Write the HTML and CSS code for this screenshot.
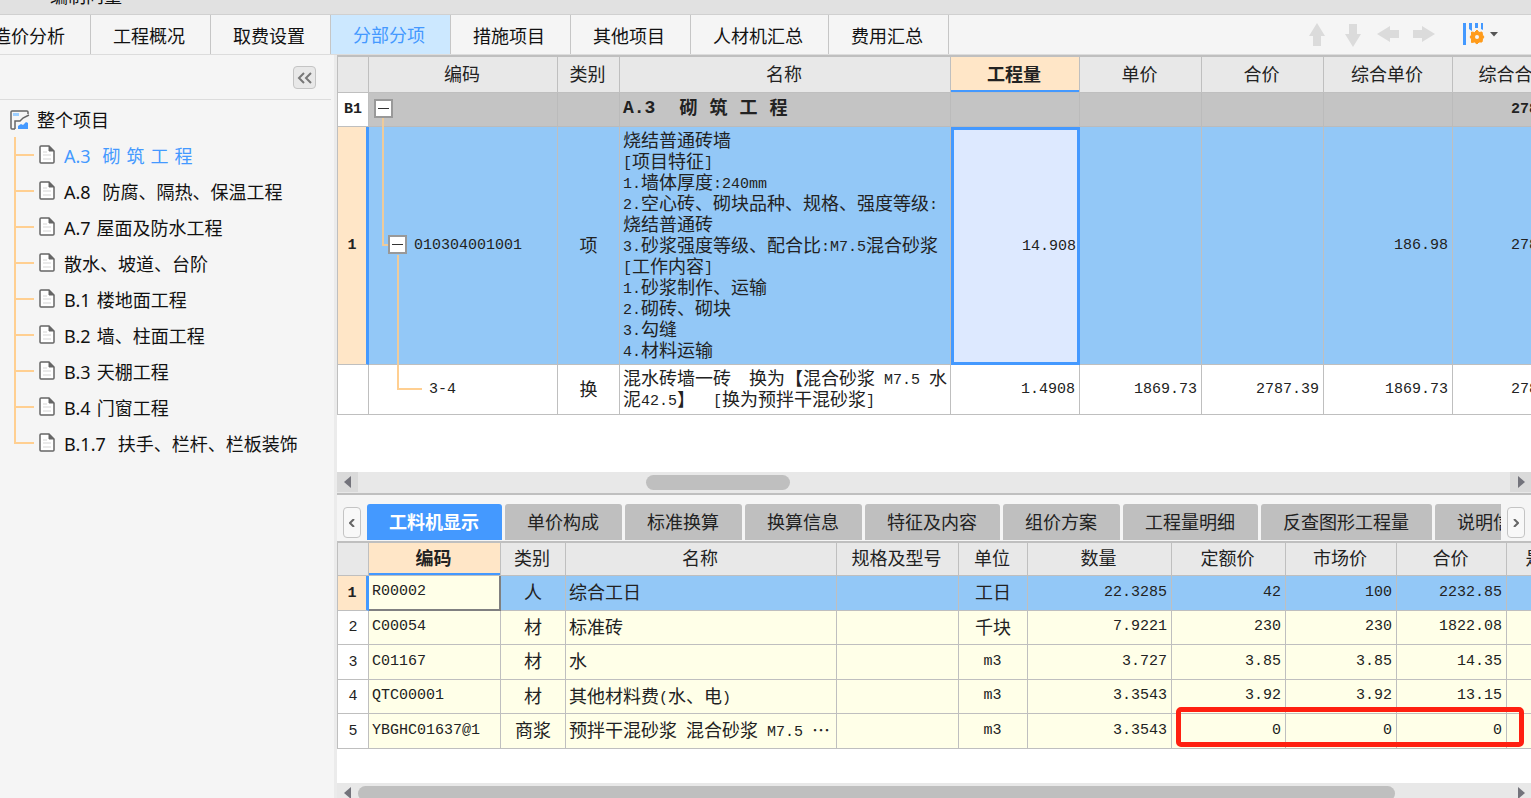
FILE: index.html
```html
<!DOCTYPE html>
<html lang="zh-CN">
<head>
<meta charset="utf-8">
<title>分部分项</title>
<link rel="stylesheet" href="styles.css">
</head>
<body>
<header class="titlebar"><span class="titlebar-text">编制问量</span></header>

<div class="toolbar">
  <nav class="main-tabs">
    <button class="main-tab">造价分析</button>
    <button class="main-tab">工程概况</button>
    <button class="main-tab">取费设置</button>
    <button class="main-tab is-active">分部分项</button>
    <button class="main-tab">措施项目</button>
    <button class="main-tab">其他项目</button>
    <button class="main-tab">人材机汇总</button>
    <button class="main-tab">费用汇总</button>
  </nav>
  <div class="tools">
    <button class="tool" aria-label="上移"><svg width="18" height="24" viewBox="0 0 18 24"><path d="M9 0 17 13H13V23H5V13H1Z" fill="#dbdbdb"/></svg></button>
    <button class="tool" aria-label="下移"><svg width="18" height="24" viewBox="0 0 18 24"><path d="M5 1H13V11H17L9 24 1 11H5Z" fill="#dbdbdb"/></svg></button>
    <button class="tool" aria-label="左移"><svg width="24" height="18" viewBox="0 0 24 18"><path d="M1 8 14 0V4H23V12H14V16Z" fill="#dbdbdb"/></svg></button>
    <button class="tool" aria-label="右移"><svg width="24" height="18" viewBox="0 0 24 18"><path d="M23 8 10 0V4H1V12H10V16Z" fill="#dbdbdb"/></svg></button>
    <button class="tool tool-settings" aria-label="列设置">
      <svg width="36" height="24" viewBox="0 0 36 24">
        <path d="M0 0H3V22H0ZM6 0H9V8L6 6ZM12 0H15V5H12ZM18 0H20V7L18 6Z" fill="#4499ff"/>
        <path d="M14 7 16 9.500 19 9 19.500 12 21 14 19.500 16 19 19 16 19 14 21 11.500 19 8.500 19.500 8.500 16 7 14 8.500 12 8.500 9 11.500 9.500Z" fill="#ff9b1a" stroke="#ff9b1a"/>
        <circle cx="14" cy="14" r="2" fill="#f5f5f5"/>
        <path d="M27 9H35L31 13.500Z" fill="#555"/>
      </svg>
    </button>
  </div>
</div>

<div class="workspace">
  <aside class="sidebar">
    <div class="sidebar-head">
      <button class="collapse" aria-label="折叠"><svg width="16" height="12" viewBox="0 0 16 12"><path d="M7 1 2 6 7 11M14 1 9 6 14 11" fill="none" stroke="#777" stroke-width="2"/></svg></button>
    </div>
    <a class="tree-root" href="#all">
      <svg width="20" height="20" viewBox="0 0 20 20"><path d="M18 4V2Q18 1 17 1H2Q1 1 1 2V18Q1 19 2 19H5" fill="none" stroke="#666" stroke-width="1.500"/><path d="M3 3H9V6H3Z" fill="#9bceff"/><path d="M5 19V11H10L13 8 19 5" fill="none" stroke="#666" stroke-width="1.500"/><path d="M8 19V16L11 14 13 15 16 12 18 13V19Z" fill="#4499ff"/></svg>
      <span>整个项目</span>
    </a>
    <ul class="tree">
      <li><a class="is-active" href="#a3"><svg class="doc"><use href="#doc"/></svg>A.3&#8196;&#8196;砌&#8196;筑&#8196;工&#8196;程</a></li>
      <li><a href="#a8"><svg class="doc"><use href="#doc"/></svg>A.8&#8196;&#8196;防腐、隔热、保温工程</a></li>
      <li><a href="#a7"><svg class="doc"><use href="#doc"/></svg>A.7&#8196;屋面及防水工程</a></li>
      <li><a href="#ss"><svg class="doc"><use href="#doc"/></svg>散水、坡道、台阶</a></li>
      <li><a href="#b1"><svg class="doc"><use href="#doc"/></svg>B.1&#8196;楼地面工程</a></li>
      <li><a href="#b2"><svg class="doc"><use href="#doc"/></svg>B.2&#8196;墙、柱面工程</a></li>
      <li><a href="#b3"><svg class="doc"><use href="#doc"/></svg>B.3&#8196;天棚工程</a></li>
      <li><a href="#b4"><svg class="doc"><use href="#doc"/></svg>B.4&#8196;门窗工程</a></li>
      <li><a href="#b17"><svg class="doc"><use href="#doc"/></svg>B.1.7&#8196;&#8196;扶手、栏杆、栏板装饰</a></li>
    </ul>
    <svg class="defs" width="0" height="0"><symbol id="doc" viewBox="0 0 16 19"><path d="M2 1H10L15 6V17Q15 18 14 18H2Q1 18 1 17V2Q1 1 2 1Z" fill="#fff" stroke="#666" stroke-width="1.500"/><path d="M10 1V6H15Z" fill="#666" stroke="#666"/><path d="M4 7H8M4 10H12M4 14H12" stroke="#d5d5d5"/></symbol></svg>
  </aside>

  <main class="panes">
    <section class="pane-top">
      <table class="grid grid-top">
        <colgroup><col class="w32"><col class="w189"><col class="w62"><col class="w331"><col class="w129"><col class="w122"><col class="w122"><col class="w129"><col class="w126"></colgroup>
        <thead>
          <tr><th></th><th>编码</th><th>类别</th><th>名称</th><th class="is-current">工程量</th><th>单价</th><th>合价</th><th>综合单价</th><th>综合合价</th></tr>
        </thead>
        <tbody>
          <tr class="group">
            <th class="rowhead">B1</th>
            <td class="code"><button class="toggle" aria-label="收起"></button><i class="stem stem-short"></i></td>
            <td></td>
            <td class="name group-name"><span class="n">A.3</span>  <span class="zh">砌</span> <span class="zh">筑</span> <span class="zh">工</span> <span class="zh">程</span></td>
            <td></td><td></td><td></td><td></td><td class="num">2787.39</td>
          </tr>
          <tr class="item">
            <th class="rowhead is-current">1</th>
            <td class="code level1"><i class="elbow elbow1"></i><button class="toggle" aria-label="收起"></button><i class="stem stem-half"></i><span>010304001001</span></td>
            <td class="center">项</td>
            <td class="name">烧结普通砖墙
<span class="n">[</span>项目特征<span class="n">]</span>
<span class="n">1.</span>墙体厚度<span class="n">:240mm</span>
<span class="n">2.</span>空心砖、砌块品种、规格、强度等级<span class="n">:</span>
烧结普通砖
<span class="n">3.</span>砂浆强度等级、配合比<span class="n">:M7.5</span>混合砂浆
<span class="n">[</span>工作内容<span class="n">]</span>
<span class="n">1.</span>砂浆制作、运输
<span class="n">2.</span>砌砖、砌块
<span class="n">3.</span>勾缝
<span class="n">4.</span>材料运输</td>
            <td class="num is-selected">14.908</td><td></td><td></td><td class="num">186.98</td><td class="num">2787.50</td>
          </tr>
          <tr class="sub">
            <th class="rowhead"></th>
            <td class="code level2"><i class="elbow elbow2"></i><span>3-4</span></td>
            <td class="center">换</td>
            <td class="name">混水砖墙一砖<span class="n">  </span>换为【混合砂浆<span class="n"> M7.5 </span>水
泥<span class="n">42.5</span>】<span class="n">  [</span>换为预拌干混砂浆<span class="n">]</span></td>
            <td class="num">1.4908</td><td class="num">1869.73</td><td class="num">2787.39</td><td class="num">1869.73</td><td class="num">2787.39</td>
          </tr>
        </tbody>
      </table>
    </section>
    <div class="scrollbar">
      <button class="scroll-btn" aria-label="向左滚动"><svg width="8" height="12" viewBox="0 0 8 12"><path d="M7 0V12L0 6Z" fill="#73737b"/></svg></button>
      <div class="track"><div class="thumb thumb-mid"></div></div>
      <button class="scroll-btn" aria-label="向右滚动"><svg width="8" height="12" viewBox="0 0 8 12"><path d="M1 0V12L8 6Z" fill="#73737b"/></svg></button>
    </div>

    <div class="detail-bar">
      <button class="pager" aria-label="上一个"><svg width="6" height="8" viewBox="0 0 6 8"><path d="M5 0 1 4 5 8" fill="none" stroke="#666" stroke-width="2"/></svg></button>
      <nav class="detail-tabs">
        <button class="detail-tab is-active">工料机显示</button>
        <button class="detail-tab">单价构成</button>
        <button class="detail-tab">标准换算</button>
        <button class="detail-tab">换算信息</button>
        <button class="detail-tab">特征及内容</button>
        <button class="detail-tab">组价方案</button>
        <button class="detail-tab">工程量明细</button>
        <button class="detail-tab">反查图形工程量</button>
        <button class="detail-tab">说明信息</button>
      </nav>
      <button class="pager" aria-label="下一个"><svg width="6" height="8" viewBox="0 0 6 8"><path d="M1 0 5 4 1 8" fill="none" stroke="#666" stroke-width="2"/></svg></button>
    </div>

    <section class="pane-bottom">
      <table class="grid grid-bottom">
        <colgroup><col class="w32"><col class="w132"><col class="w65"><col class="w271"><col class="w122"><col class="w69"><col class="w144"><col class="w114"><col class="w111"><col class="w110"><col class="w112"></colgroup>
        <thead>
          <tr><th></th><th class="is-current">编码</th><th>类别</th><th>名称</th><th>规格及型号</th><th>单位</th><th>数量</th><th>定额价</th><th>市场价</th><th>合价</th><th>是否暂估</th></tr>
        </thead>
        <tbody>
          <tr class="is-row"><th class="rowhead is-current">1</th><td class="text is-focus">R00002</td><td class="center">人</td><td class="name">综合工日</td><td></td><td class="center">工日</td><td class="num">22.3285</td><td class="num">42</td><td class="num">100</td><td class="num">2232.85</td><td></td></tr>
          <tr><th class="rowhead">2</th><td class="text">C00054</td><td class="center">材</td><td class="name">标准砖</td><td></td><td class="center">千块</td><td class="num">7.9221</td><td class="num">230</td><td class="num">230</td><td class="num">1822.08</td><td></td></tr>
          <tr><th class="rowhead">3</th><td class="text">C01167</td><td class="center">材</td><td class="name">水</td><td></td><td class="unit">m3</td><td class="num">3.727</td><td class="num">3.85</td><td class="num">3.85</td><td class="num">14.35</td><td></td></tr>
          <tr><th class="rowhead">4</th><td class="text">QTC00001</td><td class="center">材</td><td class="name">其他材料费<span class="n">(</span>水、电<span class="n">)</span></td><td></td><td class="unit">m3</td><td class="num">3.3543</td><td class="num">3.92</td><td class="num">3.92</td><td class="num">13.15</td><td></td></tr>
          <tr><th class="rowhead">5</th><td class="text">YBGHC01637@1</td><td class="center">商浆</td><td class="name">预拌干混砂浆<span class="n"> </span>混合砂浆<span class="n"> M7.5 </span>⋯</td><td></td><td class="unit">m3</td><td class="num">3.3543</td><td class="num marked">0<i class="mark"></i></td><td class="num">0</td><td class="num">0</td><td></td></tr>
        </tbody>
      </table>
    </section>
    <div class="scrollbar scrollbar-cut">
      <button class="scroll-btn" aria-label="向左滚动"><svg width="8" height="12" viewBox="0 0 8 12"><path d="M7 0V12L0 6Z" fill="#73737b"/></svg></button>
      <div class="track"><div class="thumb thumb-wide"></div></div>
      <button class="scroll-btn" aria-label="向右滚动"><svg width="8" height="12" viewBox="0 0 8 12"><path d="M1 0V12L8 6Z" fill="#73737b"/></svg></button>
    </div>
  </main>
</div>
</body>
</html>
```
FILE: styles.css
```css
* { box-sizing: border-box; }

body {
  margin: 0;
  height: 100vh;
  display: flex;
  flex-direction: column;
  overflow: hidden;
  background: #f5f5f5;
  color: #111;
  font: 18px/24px "Noto Sans", "Noto Sans CJK SC", sans-serif;
}

button {
  margin: 0;
  padding: 0;
  border: 0;
  background: none;
  color: inherit;
  font: inherit;
  white-space: nowrap;
}

svg { display: block; flex: none; }
a { color: inherit; text-decoration: none; }

/* Window title and section tabs */
.titlebar {
  flex: none;
  height: 14px;
  padding: 0 50px 8px;
  display: flex;
  align-items: flex-end;
  overflow: hidden;
  background: #e1e1e1;
}
.titlebar-text { line-height: 20px; }

.toolbar {
  flex: none;
  height: 41px;
  display: flex;
  justify-content: space-between;
  border-top: 1px solid #d0d0d0;
  border-bottom: 1px solid #dcdcdc;
}
.main-tabs { display: flex; margin-left: -29px; }
.main-tab {
  padding: 3px 25px 0 22px;
  border-right: 1px solid #c6c6c6;
}
.main-tab.is-active { padding-top: 0; background: #cce8ff; color: #4499ff; }

.tools { display: flex; align-items: center; gap: 15px; padding-right: 32px; }
.tool-settings { margin-left: 12px; }
.tool:nth-child(2) { margin-left: 3px; }
.tool:nth-child(3) { margin-left: -1px; }
.tool:nth-child(4) { margin-left: -3px; }

.workspace { flex: 1; min-height: 0; display: flex; }

/* Project tree */
.sidebar {
  flex: none;
  width: 337px;
  border-right: 3px solid #ebebeb;
}
.sidebar-head {
  height: 45px;
  margin-right: 3px;
  padding: 11px 15px 0 0;
  display: flex;
  justify-content: flex-end;
  border-bottom: 1px solid #dcdcdc;
}
.collapse {
  width: 23px;
  height: 23px;
  display: grid;
  place-items: center;
  border: 1px solid #c4c4c4;
  border-radius: 4px;
  background: #e8e8e8;
}
.tree-root {
  height: 37px;
  padding: 3px 0 0 10px;
  display: flex;
  align-items: center;
  gap: 7px;
}
.tree { margin: 0 0 0 14px; padding: 0; list-style: none; }
.tree li {
  position: relative;
  height: 36px;
  padding: 1px 0 0 25px;
}
.tree li::before {
  content: "";
  position: absolute;
  left: 0;
  top: 0;
  height: 100%;
  border-left: 2px solid #ffcf91;
}
.tree li:last-child::before { height: 18px; }
.tree li::after {
  content: "";
  position: absolute;
  left: 0;
  top: 17px;
  width: 20px;
  border-top: 2px solid #ffcf91;
}
.tree a { height: 36px; display: flex; align-items: center; white-space: pre; }
.tree .is-active { color: #4499ff; }
.doc { width: 16px; height: 19px; margin: 0 9px 3px 0; }
.defs { position: absolute; }

/* Grids */
.panes { flex: 1; min-width: 0; display: flex; flex-direction: column; }
.pane-top { flex: 1; min-height: 0; overflow: hidden; background: #fff; }
.pane-bottom { flex: none; padding-bottom: 34px; overflow: hidden; background: #fff; }

.grid {
  table-layout: fixed;
  width: 0;
  border-collapse: separate;
  border-spacing: 0;
  border-top: 2px solid #bfbfbf;
  color: #222;
  font-family: "Noto Sans CJK SC", sans-serif;
  font-size: 18px;
  line-height: 21px;
}
.grid th, .grid td {
  padding: 0 4px 0 3px;
  border-right: 1px solid #bfbfbf;
  border-bottom: 1px solid #bfbfbf;
  white-space: pre;
}
.grid thead th { height: 36px; padding: 0 2px 3px 0; background: #e8e8e8; font-weight: 400; }
.grid thead th:first-child, .grid .rowhead { border-left: 1px solid #bfbfbf; }
.grid thead .is-current { background: #ffe6c7; box-shadow: inset 0 -2px #4499ff; font-weight: 700; }
.grid .rowhead {
  padding: 0;
  background: #fff;
  font: 400 15px/21px "Liberation Mono", monospace;
  text-align: center;
}
.grid .rowhead.is-current { background: #ffe6c7; border-right: 3px solid #4499ff; font-weight: 700; }
.grid .name { padding-right: 0; padding-bottom: 3px; text-align: left; }
.grid .center { padding: 0 0 3px; text-align: center; }
.grid .n, .grid .num, .grid .text, .grid .code, .grid .unit {
  font-family: "Liberation Mono", monospace;
  font-size: 15px;
}
.grid .n { line-height: 0; vertical-align: 1px; }
.grid .num { text-align: right; }
.grid .unit { text-align: center; }

.w32 { width: 32px; }
.w62 { width: 62px; }
.w65 { width: 65px; }
.w69 { width: 69px; }
.w110 { width: 110px; }
.w111 { width: 111px; }
.w112 { width: 112px; }
.w114 { width: 114px; }
.w122 { width: 122px; }
.w126 { width: 126px; }
.w129 { width: 129px; }
.w132 { width: 132px; }
.w144 { width: 144px; }
.w189 { width: 189px; }
.w271 { width: 271px; }
.w331 { width: 331px; }

.group td { height: 34px; background: #c4c4c4; border-color: #bbb; font-weight: 700; }
.grid .group .rowhead { font-weight: 700; }
.grid .group-name { font-family: "Liberation Mono", monospace; font-size: 20px; }
.group .zh { font-family: "Noto Sans CJK SC", sans-serif; font-size: 18px; line-height: 0; }
.grid .group .n { font-size: 18px; }
.item td { height: 238px; background: #93c8f7; }
.item .is-selected { background: #dde9ff; border: 0; box-shadow: inset 0 0 0 3px #4499ff; }
.sub td { height: 50px; }

.grid .code { position: relative; padding: 0 0 1px 5px; }
.grid .level1 { padding-left: 19px; }
.grid .level2 { padding-left: 60px; }
.toggle {
  display: inline-block;
  position: relative;
  width: 19px;
  height: 19px;
  margin-right: 7px;
  vertical-align: middle;
  border: 2px solid #999;
  background: #fff;
}
.toggle::before {
  content: "";
  position: absolute;
  left: 2px;
  right: 2px;
  top: 7px;
  border-top: 1px solid #333;
}
.stem, .elbow { position: absolute; border-left: 2px solid #eecb9b; }
.stem { bottom: -1px; }
.stem-short { left: 13px; height: 9px; }
.stem-half { left: 28px; top: calc(50% + 9px); }
.elbow { top: 0; height: 50%; border-bottom: 2px solid #eecb9b; }
.elbow1 { left: 13px; width: 6px; }
.elbow2 { left: 28px; width: 25px; border-color: #ffcf91; }

.grid-bottom thead th { height: 33px; }
.grid-bottom td { height: 34px; background: #ffffe8; }
.grid-bottom tr:nth-child(odd) td { height: 35px; }
.grid-bottom .num, .grid-bottom .unit, .grid-bottom .text { padding-bottom: 2px; }
.grid-bottom .is-row td { background: #93c8f7; }
.grid-bottom .is-row .is-focus {
  background: #ffffe8;
  border-right: 2px solid #808080;
  border-bottom: 2px solid #808080;
}
.marked { position: relative; }
.mark {
  position: absolute;
  z-index: 1;
  left: 4px;
  top: -7px;
  width: 348px;
  height: 40px;
  border: 5px solid #ff2010;
  border-radius: 5px;
}

/* Scroll bars */
.scrollbar {
  flex: none;
  height: 23px;
  display: flex;
  overflow: hidden;
  background: #e8e8e8;
  border-bottom: 2px solid #bfbfbf;
}
.scroll-btn { width: 21px; height: 20px; display: grid; place-items: center; background: #dadada; }
.track { flex: 1; padding-top: 3px; }
.thumb { height: 15px; border-radius: 8px; background: #bfbfbf; }
.thumb-mid { width: 12.5%; margin-left: 25%; }
.thumb-wide { width: 90%; }
.scrollbar-cut { height: 15px; border-bottom: 0; }
.scrollbar-cut .scroll-btn { background: none; }

/* Detail tabs */
.detail-bar {
  flex: none;
  height: 46px;
  padding: 9px 6px 0;
  display: flex;
  gap: 6px;
}
.pager {
  flex: none;
  width: 18px;
  height: 31px;
  margin-top: 3px;
  display: grid;
  place-items: center;
  border: 1px solid #c4c4c4;
  border-radius: 4px;
  background: #f8f8f8;
}
.detail-tabs { flex: 1; min-width: 0; height: 36px; display: flex; gap: 3px; overflow: hidden; }
.detail-tab {
  flex: none;
  padding: 0 23px 1px 22px;
  border-radius: 3px 3px 0 0;
  background: #bfbfbf;
  color: #222;
}
.detail-tab.is-active { background: #4499ff; color: #fff; font-weight: 700; }
```
